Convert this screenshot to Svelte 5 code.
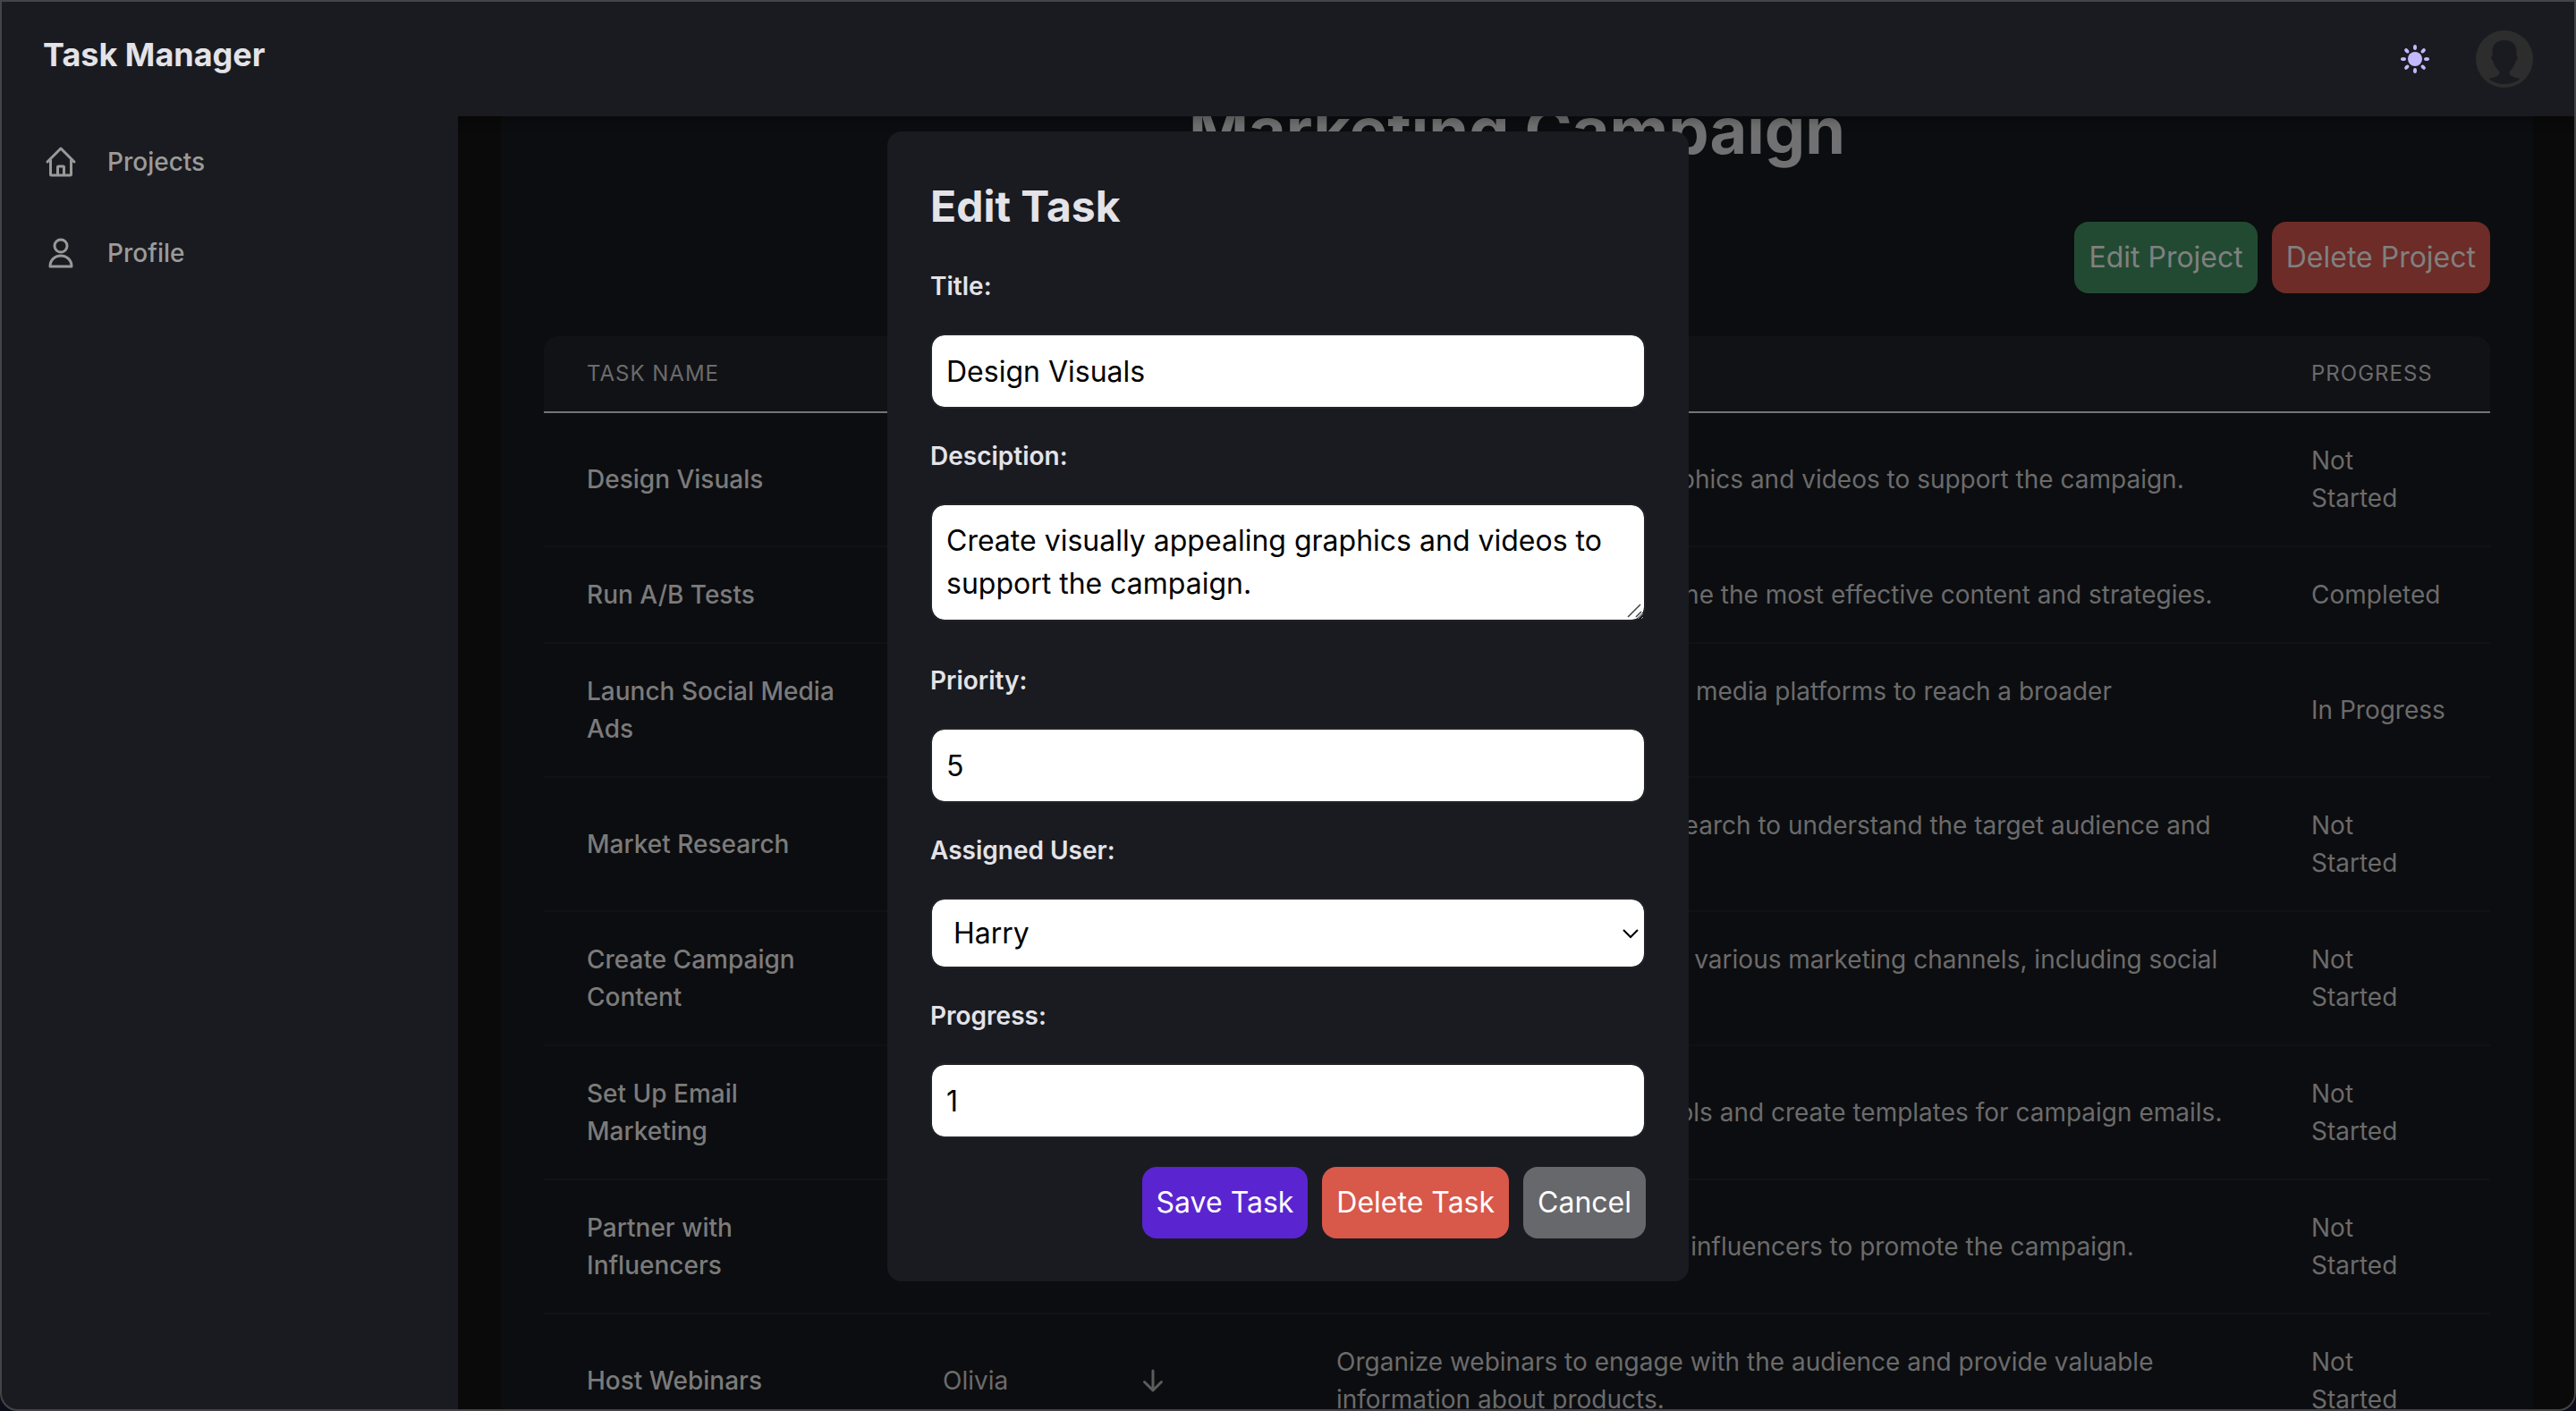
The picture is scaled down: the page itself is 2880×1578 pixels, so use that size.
<script lang="ts">
  type Task = { name: string; user: string; description: string; progress: string };

  const tasks: Task[] = [
    { name: 'Design Visuals', user: 'Harry', description: 'Create visually appealing graphics and videos to support the campaign.', progress: 'Not\nStarted' },
    { name: 'Run A/B Tests', user: 'Emma', description: 'Conduct split tests to determine the most effective content and strategies.', progress: 'Completed' },
    { name: 'Launch Social Media Ads', user: 'Liam', description: 'Prepare and run ads on social media platforms to reach a broader audience.', progress: 'In Progress' },
    { name: 'Market Research', user: 'Noah', description: 'Conduct thorough market research to understand the target audience and competitors.', progress: 'Not\nStarted' },
    { name: 'Create Campaign Content', user: 'Sophia', description: 'Develop engaging content for various marketing channels, including social media and email.', progress: 'Not\nStarted' },
    { name: 'Set Up Email Marketing', user: 'James', description: 'Configure email marketing tools and create templates for campaign emails.', progress: 'Not\nStarted' },
    { name: 'Partner with Influencers', user: 'Ava', description: 'Collaborate with social media influencers to promote the campaign.', progress: 'Not\nStarted' },
    { name: 'Host Webinars', user: 'Olivia', description: 'Organize webinars to engage with the audience and provide valuable information about products.', progress: 'Not\nStarted' }
  ];
  const users = ['Harry', 'Olivia'];

  let title = $state('Design Visuals');
  let description = $state('Create visually appealing graphics and videos to support the campaign.');
  let priority = $state('5');
  let user = $state('Harry');
  let progress = $state('1');
</script>

<div class="app">
  <header class="topbar">
    <h1 class="brand">Task Manager</h1>
    <div class="tools">
      <button class="theme" aria-label="Toggle theme">
        <svg viewBox="0 0 32 32" width="32" height="32" fill="#c4b8ff">
          <circle cx="16" cy="16" r="8" />
          {#each [0, 45, 90, 135, 180, 225, 270, 315] as angle}
            <ellipse cx="16" cy="3" rx="2" ry="3" transform="rotate({angle} 16 16)" />
          {/each}
        </svg>
      </button>
      <button class="avatar" aria-label="Account">
        <svg viewBox="0 0 64 64" width="64" height="64">
          <circle cx="32" cy="32" r="32" fill="#2d2d2d" />
          <path fill="#1a1b20" d="M32 11c-9 0-13.500 5-13.500 12v5.500c-2 0-1.500 4 .5 5 1 5 4 9 7.500 13 .5 4-4 6-12 7.500C19 58 25 60 32 60s13-2 17.500-6c-8-1.500-12.500-3.500-12-7.500 3.500-4 6.500-8 7.500-13 2-1 2.500-5 .5-5V23c0-7-4.500-12-13.500-12Z" />
        </svg>
      </button>
    </div>
  </header>

  <div class="body">
    <nav class="sidebar">
      <a href="#projects">
        <svg viewBox="0 0 40 40" width="40" height="40">
          <path d="M5 20 20 5l15 15M8.500 18v16a1 1 0 0 0 1 1h21a1 1 0 0 0 1-1V18M16.500 35v-9a1 1 0 0 1 1-1h5a1 1 0 0 1 1 1v9" />
        </svg>
        Projects
      </a>
      <a href="#profile">
        <svg viewBox="0 0 40 40" width="40" height="40">
          <circle cx="20" cy="12" r="7" />
          <path d="M8 35c0-7 5-12 12-12s12 5 12 12Z" />
        </svg>
        Profile
      </a>
    </nav>

    <main class="page">
      <section class="project">
        <h2>Marketing Campaign</h2>
        <div class="actions">
          <button class="btn green">Edit Project</button>
          <button class="btn red">Delete Project</button>
        </div>
        <table>
          <colgroup>
            <col class="c-name" /><col class="c-user" /><col class="c-priority" /><col /><col class="c-progress" />
          </colgroup>
          <thead>
            <tr><th>Task Name</th><th>User</th><th>Priority</th><th>Description</th><th>Progress</th></tr>
          </thead>
          <tbody>
            {#each tasks as task}
              <tr>
                <td class="name">{task.name}</td>
                <td>{task.user}</td>
                <td>
                  <svg class="arrow" viewBox="0 0 32 32" width="32" height="32" role="img" aria-label="Low">
                    <path d="M16 5v22M6.500 17.500 16 27l9.500-9.500" />
                  </svg>
                </td>
                <td>{task.description}</td>
                <td class="status">{task.progress}</td>
              </tr>
            {/each}
          </tbody>
        </table>
      </section>
    </main>
  </div>

  <div class="overlay">
    <form class="modal" aria-labelledby="dialog-title" onsubmit={(e) => e.preventDefault()}>
      <h2 id="dialog-title">Edit Task</h2>
      <label for="title">Title:</label>
      <input id="title" type="text" bind:value={title} />
      <label for="description">Desciption:</label>
      <textarea id="description" rows="2" bind:value={description}></textarea>
      <label for="priority">Priority:</label>
      <input id="priority" type="text" inputmode="numeric" bind:value={priority} />
      <label for="user">Assigned User:</label>
      <select id="user" bind:value={user}>
        {#each users as name}<option>{name}</option>{/each}
      </select>
      <label for="progress">Progress:</label>
      <input id="progress" type="text" inputmode="numeric" bind:value={progress} />
      <div class="buttons">
        <button class="btn save" type="submit">Save Task</button>
        <button class="btn delete" type="button">Delete Task</button>
        <button class="btn cancel" type="button">Cancel</button>
      </div>
    </form>
  </div>
  <div class="frame"></div>
</div>

<style>
  :global(body) {
    background: #0a0a0a;
    overflow: hidden;
  }
  .app, .app * {
    box-sizing: border-box;
  }
  .app {
    position: relative;
    display: flex;
    flex-direction: column;
    height: 100vh;
    overflow: hidden;
    padding-top: 2px;
    font-family: Inter, 'Liberation Sans', sans-serif;
    font-size: 28px;
    line-height: 42px;
    color: #e3e3e8;
    background: #0a0a0a;
  }
  h1, h2 {
    margin: 0;
    font-weight: 700;
  }
  button, input, select, textarea {
    font: inherit;
    margin: 0;
  }
  button {
    border: 0;
    padding: 0;
    background: none;
    cursor: pointer;
  }
  button svg {
    display: block;
    overflow: visible;
  }
  .topbar {
    position: relative;
    z-index: 3;
    flex: none;
    display: flex;
    justify-content: space-between;
    align-items: flex-start;
    padding: 32px 48px;
    background: #1a1b20;
    box-shadow: 0 4px 12px rgba(0, 0, 0, 0.3);
  }
  .brand {
    font-size: 36px;
    line-height: 54px;
  }
  .tools {
    display: flex;
    align-items: center;
    gap: 52px;
  }
  .body {
    flex: 1;
    min-height: 0;
    display: flex;
  }
  .sidebar {
    position: relative;
    z-index: 4;
    flex: none;
    width: 512px;
    display: flex;
    flex-direction: column;
    gap: 60px;
    padding: 30px 48px;
    background: #1a1b20;
  }
  .sidebar a {
    display: flex;
    align-items: center;
    gap: 32px;
    font-weight: 500;
    color: #9b9b9b;
    text-decoration: none;
  }
  .sidebar svg {
    fill: none;
    stroke: #999;
    stroke-width: 3;
    stroke-linecap: round;
    stroke-linejoin: round;
  }
  .page {
    flex: 1;
    min-width: 0;
    display: flex;
    flex-direction: column;
    padding: 0 48px;
    overflow: hidden;
  }
  .project {
    flex: none;
    margin-top: -38px;
    padding: 0 48px;
    background: #0c0d10;
  }
  .project h2 {
    font-size: 72px;
    line-height: 108px;
    text-align: center;
    color: #717173;
  }
  .actions {
    display: flex;
    justify-content: flex-end;
    gap: 16px;
    padding: 48px 0;
  }
  .btn {
    height: 80px;
    padding: 0 16px;
    border-radius: 16px;
    font-size: 32px;
    line-height: 48px;
    color: #fff;
  }
  .green {
    background: #224a32;
    color: #808080;
  }
  .red {
    background: #6d2c27;
    color: #808080;
  }
  table {
    width: 100%;
    table-layout: fixed;
    border-collapse: separate;
    border-spacing: 0;
    color: #6b6b6b;
  }
  .c-name { width: 398px; }
  .c-user { width: 219px; }
  .c-priority { width: 221px; }
  .c-progress { width: 248px; }
  th {
    padding: 24px 48px;
    background: #111216;
    border-bottom: 2px solid #757575;
    font-size: 24px;
    line-height: 36px;
    font-weight: 400;
    letter-spacing: 1px;
    text-align: left;
    text-transform: uppercase;
  }
  th:first-child { border-top-left-radius: 16px; }
  th:last-child { border-top-right-radius: 16px; }
  td {
    padding: 32px 48px;
    border-bottom: 2px solid #111216;
    vertical-align: middle;
  }
  .name {
    font-weight: 500;
    color: #7b7b7b;
  }
  .status {
    white-space: pre-line;
  }
  .arrow {
    display: block;
    fill: none;
    stroke: #5c5c5c;
    stroke-width: 3;
    stroke-linecap: round;
    stroke-linejoin: round;
  }
  .overlay {
    position: absolute;
    inset: 2px 0 0;
    z-index: 2;
    display: flex;
    align-items: center;
    justify-content: center;
  }
  .modal {
    width: 896px;
    display: flex;
    flex-direction: column;
    gap: 32px;
    padding: 48px;
    border-radius: 16px;
    background: #1a1b20;
  }
  .modal h2 {
    font-size: 48px;
    line-height: 72px;
  }
  .modal label {
    font-weight: 600;
  }
  .modal input, .modal textarea, .modal select {
    width: 100%;
    padding: 16px;
    border: 2px solid #222328;
    border-radius: 16px;
    background: #fff;
    background-clip: padding-box;
    color: #000;
    font-size: 32px;
    line-height: 48px;
    outline: 0;
  }
  .modal input {
    height: 84px;
  }
  .modal textarea {
    display: block;
    height: 132px;
    margin-bottom: 13px;
    resize: vertical;
    overflow: hidden;
    background: #fff url("data:image/svg+xml,%3Csvg xmlns='http://www.w3.org/2000/svg' width='18' height='18' fill='none' stroke='%23444' stroke-width='1.500'%3E%3Cpath d='M1 16 15 2M10 16l6-6'/%3E%3C/svg%3E") no-repeat right 1px bottom 1px;
    background-clip: padding-box;
  }
  .modal select {
    appearance: none;
    height: 79px;
    padding: 12px 24px;
    background: #fff url("data:image/svg+xml,%3Csvg xmlns='http://www.w3.org/2000/svg' width='18' height='12' fill='none' stroke='%23000' stroke-width='2'%3E%3Cpath d='M1 2l8 8 8-8'/%3E%3C/svg%3E") no-repeat right 6px center;
    background-clip: padding-box;
  }
  .buttons {
    display: flex;
    justify-content: flex-end;
    gap: 16px;
  }
  .save { background: #5a25d0; }
  .delete { background: #d8584a; }
  .cancel { background: #67686b; }
  .frame {
    position: absolute;
    inset: 0;
    z-index: 5;
    pointer-events: none;
    border: 2px solid #434446;
    border-radius: 0 0 20px 20px;
    box-shadow: 0 0 0 20px #0b0d18;
  }
</style>
